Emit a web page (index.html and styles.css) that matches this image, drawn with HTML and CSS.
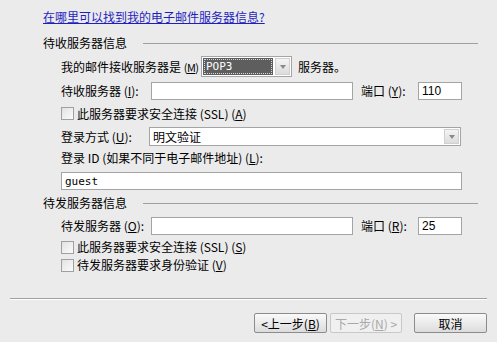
FILE: index.html
```html
<!DOCTYPE html>
<html lang="zh-CN">
<head>
    <meta charset="UTF-8">
    <title>电子邮件服务器设置</title>
    <link rel="stylesheet" href="styles.css">
</head>
<body>
    <div class="wizard">
        <div class="content">
            <a class="help" href="#">在哪里可以找到我的电子邮件服务器信息?</a>

            <div class="group-title">
                <span>待收服务器信息</span>
                <div class="rule"></div>
            </div>
            <div class="group-body">
                <div class="row row-combo">
                    <label class="lbl-wide">我的邮件接收服务器是 <span class="key">(<u>M</u>)</span></label>
                    <div class="combo">
                        <div class="combo-value"><span>POP3</span></div>
                        <div class="drop-btn"><span class="arrow"></span></div>
                    </div>
                    <span class="after">服务器。</span>
                </div>
                <div class="row row-input">
                    <label class="lbl-server">待收服务器 (<u>I</u>):</label>
                    <input class="field server" type="text">
                    <label class="lbl-port">端口 (<u>Y</u>):</label>
                    <input class="field port" type="text" value="110">
                </div>
                <div class="row row-check">
                    <span class="box"></span>
                    <span>此服务器要求安全连接 (SSL) (<u>A</u>)</span>
                </div>
                <div class="row row-select">
                    <label class="lbl-login">登录方式 (<u>U</u>):</label>
                    <div class="select">
                        <span class="select-value">明文验证</span>
                        <div class="drop-btn"><span class="arrow"></span></div>
                    </div>
                </div>
                <div class="row row-label">登录 ID (如果不同于电子邮件地址) (<u>L</u>):</div>
                <div class="row row-guest">
                    <input class="field guest" type="text" value="guest">
                </div>
            </div>

            <div class="group-title second">
                <span>待发服务器信息</span>
                <div class="rule"></div>
            </div>
            <div class="group-body">
                <div class="row row-input out">
                    <label class="lbl-server">待发服务器 (<u>O</u>):</label>
                    <input class="field server" type="text">
                    <label class="lbl-port">端口 (<u>R</u>):</label>
                    <input class="field port" type="text" value="25">
                </div>
                <div class="row row-check out-ssl">
                    <span class="box"></span>
                    <span>此服务器要求安全连接 (SSL) (<u>S</u>)</span>
                </div>
                <div class="row row-check out-auth">
                    <span class="box"></span>
                    <span>待发服务器要求身份验证 (<u>V</u>)</span>
                </div>
            </div>
        </div>

        <div class="separator"></div>

        <div class="buttons">
            <button>&lt;上一步(<u>B</u>)</button>
            <button disabled>下一步(<u>N</u>) &gt;</button>
            <button class="cancel">取消</button>
        </div>
    </div>
</body>
</html>
```

FILE: styles.css
```css
* { margin: 0; padding: 0; box-sizing: border-box; }
body {
    font-family: "Noto Sans CJK SC", "Noto Sans", sans-serif;
    font-size: 12px;
    line-height: 14px;
    color: #000;
    background: #ebebeb;
    width: 497px;
    height: 342px;
    overflow: hidden;
}

u { text-decoration: underline; }

.wizard {
    padding: 9px 0 0 10px;
}

.content {
    padding-left: 33px;
    width: 468px;
}

.help {
    display: block;
    height: 16px;
    line-height: 16px;
    color: #1f1fbf;
    text-decoration: underline;
}

.group-title {
    display: flex;
    align-items: center;
    height: 16px;
    margin-top: 10px;
}

.group-title.second {
    margin-top: 5px;
}

.group-title .rule {
    flex: 1;
    height: 1px;
    background: #a0a0a0;
    margin-left: 16px;
}

.group-body {
    padding-left: 18px;
}

.row {
    display: flex;
    align-items: center;
    white-space: nowrap;
}

.row > * { flex-shrink: 0; }

.row-combo { height: 21px; margin-top: 5px; }
.row-input { height: 18px; margin-top: 5px; }
.row-input.out { margin-top: 6px; }
.row-check { height: 15px; margin-top: 6px; }
.row-check.out-ssl { height: 14px; margin-top: 5px; }
.row-check.out-auth { height: 14px; margin-top: 4px; }
.row-select { height: 19px; margin-top: 6px; }
.row-label { height: 14px; margin-top: 5px; }
.row-guest { height: 18px; margin-top: 7px; }

.lbl-wide { width: 140px; }
.lbl-wide .key { font-size: 11px; letter-spacing: -0.5px; }
.lbl-server { width: 90px; }
.lbl-port { width: 57px; margin-left: 8px; }
.lbl-login { width: 88px; }

.field {
    height: 18px;
    border: 1px solid #a4a4a4;
    background: #fff;
    font-family: "Liberation Sans", sans-serif;
    font-size: 12px;
    padding: 0 3px;
    color: #000;
    outline: none;
}

.field.server { width: 202px; }
.field.port { width: 44px; }
.field.guest {
    width: 401px;
    font-family: "DejaVu Sans Mono", monospace;
    font-size: 11px;
}

.combo {
    display: flex;
    width: 91px;
    height: 21px;
    border: 1px solid #a4a4a4;
    background: #fff;
    padding: 1px;
}

.combo-value {
    flex: 1;
    background: #5e5e5e;
    padding: 1px;
}

.combo-value span {
    display: block;
    height: 100%;
    border: 1px dotted #d8d8d8;
    color: #fff;
    font-family: "DejaVu Sans Mono", monospace;
    font-size: 11px;
    line-height: 14px;
    padding-left: 1px;
}

.after { margin-left: 6px; }

.drop-btn {
    width: 15px;
    margin-left: 2px;
    background: linear-gradient(#f4f4f4, #dcdcdc);
    border: 1px solid #d0d0d0;
    display: flex;
    align-items: center;
    justify-content: center;
}

.arrow {
    width: 0;
    height: 0;
    border-left: 3px solid transparent;
    border-right: 3px solid transparent;
    border-top: 4px solid #8a8a8a;
}

.select {
    display: flex;
    width: 312px;
    height: 19px;
    border: 1px solid #a4a4a4;
    background: #fff;
    padding: 1px 1px 1px 0;
}

.select-value {
    flex: 1;
    padding-left: 3px;
    line-height: 15px;
}

.box {
    width: 13px;
    height: 13px;
    border: 1px solid #a0a0a0;
    background: linear-gradient(135deg, #e2e2e2, #fbfbfb);
    margin-right: 3px;
}

.separator {
    width: 477px;
    height: 2px;
    margin-top: 26px;
    border-top: 1px solid #a0a0a0;
    border-bottom: 1px solid #fff;
}

.buttons {
    display: flex;
    justify-content: flex-end;
    gap: 3px;
    width: 477px;
    margin-top: 13px;
}

button {
    width: 73px;
    height: 20px;
    border: 1px solid #8c8c8c;
    border-radius: 2px;
    background: linear-gradient(#fafafa, #dcdcdc);
    font-family: "Noto Sans CJK SC", sans-serif;
    font-size: 12px;
    color: #000;
}

button:disabled {
    width: 72px;
    border-color: #c8c8c8;
    background: #f0f0f0;
    color: #a8a8a8;
}

button.cancel {
    margin-left: 9px;
}
```
